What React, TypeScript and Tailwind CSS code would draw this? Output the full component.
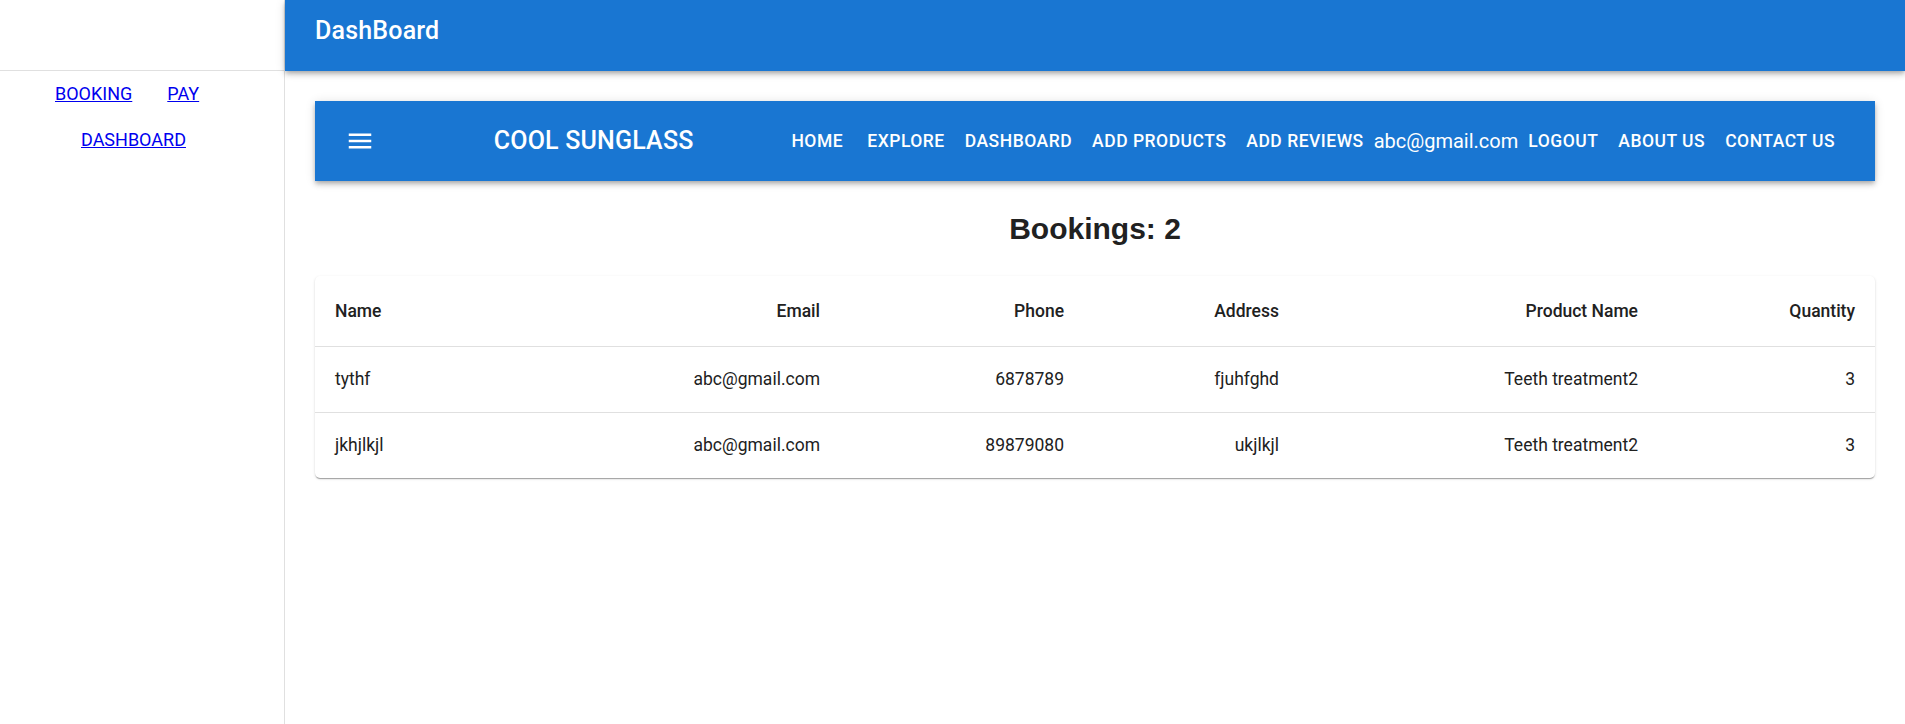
import { useState } from "react";

interface IBooking {
  name: string;
  email: string;
  phone: string;
  address: string;
  product: string;
  quantity: number;
}

const bookings: IBooking[] = [
  { name: "tythf", email: "abc@gmail.com", phone: "6878789", address: "fjuhfghd", product: "Teeth treatment2", quantity: 3 },
  { name: "jkhjlkjl", email: "abc@gmail.com", phone: "89879080", address: "ukjlkjl", product: "Teeth treatment2", quantity: 3 },
];

const navLinks = ["Home", "Explore", "Dashboard", "Add Products", "Add Reviews"];
const navLinksEnd = ["Logout", "About Us", "Contact Us"];

const barShadow =
  "shadow-[0px_2px_4px_-1px_rgba(0,0,0,0.2),0px_4px_5px_0px_rgba(0,0,0,0.14),0px_1px_10px_0px_rgba(0,0,0,0.12)]";

const NavButton = ({ label }: { label: string }) => (
  <button className="min-w-[80px] h-[45px] px-[10px] text-[17.5px] font-medium uppercase tracking-[0.02857em] leading-[1.75] text-white whitespace-nowrap">
    {label}
  </button>
);

const MenuIcon = () => (
  <svg width="30" height="30" viewBox="0 0 24 24" fill="white">
    <path d="M3 18h18v-2H3zm0-5h18v-2H3zm0-7v2h18V6z" />
  </svg>
);

const Navigation = () => (
  <div className={`flex h-[80px] items-center bg-[#1976d2] px-[30px] ${barShadow}`}>
    <button className="-ml-[15px] mr-[20px] p-[15px]">
      <MenuIcon />
    </button>
    <div className="flex-1 text-center text-[25px] font-medium tracking-[0.0075em] text-white uppercase">
      Cool Sunglass
    </div>
    <div className="flex items-center">
      {navLinks.map((l) => (
        <NavButton key={l} label={l} />
      ))}
      <span className="text-[20px] leading-[1.5] text-white">abc@gmail.com</span>
      {navLinksEnd.map((l) => (
        <NavButton key={l} label={l} />
      ))}
    </div>
  </div>
);

const BookingTable = ({ data }: { data: IBooking[] }) => (
  <div className="rounded-[5px] bg-white shadow-[0px_2px_1px_-1px_rgba(0,0,0,0.2),0px_1px_1px_0px_rgba(0,0,0,0.14),0px_1px_3px_0px_rgba(0,0,0,0.12)] overflow-hidden">
    <table className="w-full table-fixed border-collapse text-[17.5px] text-[#212121]">
      <thead>
        <tr className="border-b border-[#e0e0e0]">
          <th className="w-[262px] p-[20px] text-left font-medium leading-[30px]">Name</th>
          <th className="w-[263px] p-[20px] text-right font-medium leading-[30px]">Email</th>
          <th className="w-[244px] p-[20px] text-right font-medium leading-[30px]">Phone</th>
          <th className="w-[215px] p-[20px] text-right font-medium leading-[30px]">Address</th>
          <th className="w-[359px] p-[20px] text-right font-medium leading-[30px]">Product Name</th>
          <th className="w-[217px] p-[20px] text-right font-medium leading-[30px]">Quantity</th>
        </tr>
      </thead>
      <tbody>
        {data.map((row, i) => (
          <tr key={i} className={i < data.length - 1 ? "border-b border-[#e0e0e0]" : ""}>
            <td className="p-[20px] text-left leading-[25px]">{row.name}</td>
            <td className="p-[20px] text-right leading-[25px]">{row.email}</td>
            <td className="p-[20px] text-right leading-[25px]">{row.phone}</td>
            <td className="p-[20px] text-right leading-[25px]">{row.address}</td>
            <td className="p-[20px] text-right leading-[25px]">{row.product}</td>
            <td className="p-[20px] text-right leading-[25px]">{row.quantity}</td>
          </tr>
        ))}
      </tbody>
    </table>
  </div>
);

const App = () => {
  const [rows] = useState<IBooking[]>(bookings);
  return (
    <div className="flex min-h-screen bg-white font-['Roboto',sans-serif]">
      <aside className="w-[285px] shrink-0 border-r border-[#e0e0e0]">
        <div className="h-[71px] border-b border-[#e0e0e0]" />
        <div className="flex flex-col gap-[19px] pt-[9px] text-[18px] leading-[27px]">
          <div className="flex gap-[35px] pl-[55px]">
            <a href="#" className="text-[#0000ee] underline">BOOKING</a>
            <a href="#" className="text-[#0000ee] underline">PAY</a>
          </div>
          <div className="pl-[81px]">
            <a href="#" className="text-[#0000ee] underline">DASHBOARD</a>
          </div>
        </div>
      </aside>
      <div className="flex min-w-0 flex-1 flex-col">
        <header className={`relative z-10 flex h-[71px] items-center bg-[#1976d2] px-[30px] pb-[9px] ${barShadow}`}>
          <h1 className="text-[25px] font-medium tracking-[0.0075em] text-white">DashBoard</h1>
        </header>
        <main className="p-[30px]">
          <Navigation />
          <h2 className="mt-[31px] mb-[30px] text-center font-['Liberation_Sans',Arial,sans-serif] text-[30px] font-bold leading-[34px] text-[#212121]">
            Bookings: {rows.length}
          </h2>
          <BookingTable data={rows} />
        </main>
      </div>
    </div>
  );
};

export default App;
